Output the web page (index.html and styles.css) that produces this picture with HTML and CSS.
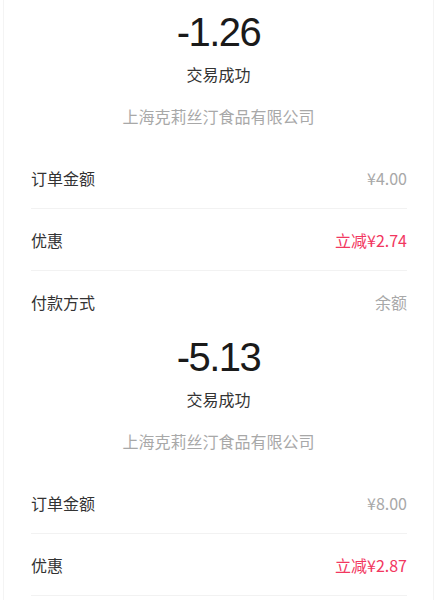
FILE: index.html
```html
<!DOCTYPE html>
<html lang="zh-CN">
<head>
    <meta charset="UTF-8">
    <meta name="viewport" content="width=device-width, initial-scale=1.0">
    <title>交易详情</title>
    <link rel="stylesheet" href="styles.css">
</head>
<body>

<div class="page">
    <div class="receipt receipt-top">
        <div class="summary">
            <div class="amount">-1.26</div>
            <div class="status">交易成功</div>
            <div class="merchant">上海克莉丝汀食品有限公司</div>
        </div>
        <div class="row">
            <span class="label">订单金额</span>
            <span class="value">¥4.00</span>
        </div>
        <div class="row">
            <span class="label">优惠</span>
            <span class="value discount">立减¥2.74</span>
        </div>
        <div class="row">
            <span class="label">付款方式</span>
            <span class="value">余额</span>
        </div>
    </div>

    <div class="receipt receipt-bottom">
        <div class="summary">
            <div class="amount">-5.13</div>
            <div class="status">交易成功</div>
            <div class="merchant">上海克莉丝汀食品有限公司</div>
        </div>
        <div class="row">
            <span class="label">订单金额</span>
            <span class="value">¥8.00</span>
        </div>
        <div class="row">
            <span class="label">优惠</span>
            <span class="value discount">立减¥2.87</span>
        </div>
    </div>
</div>

</body>
</html>
```

FILE: styles.css
```css
body {
    font-family: "Noto Sans CJK SC", "Noto Sans", sans-serif;
    background-color: #ffffff;
    color: #333333;
    margin: 0;
    padding: 0 3px;
}
.page {
    border-left: 1px solid #f4f4f4;
    border-right: 1px solid #f4f4f4;
}
/* two screenshots stacked: each one is cropped */
.receipt {
    overflow: hidden;
}
.receipt-top {
    height: 325px;
}
.receipt-bottom {
    height: 275px;
}
.summary {
    text-align: center;
    padding: 10px 0 20px;
}
.amount {
    font-family: "Liberation Sans", sans-serif;
    font-size: 40px;
    line-height: 45px;
    color: #1a1a1a;
    letter-spacing: -1.5px;
}
.status {
    font-size: 16px;
    line-height: 22px;
    margin-top: 8px;
    color: #333333;
}
.merchant {
    font-size: 16px;
    line-height: 22px;
    margin-top: 20px;
    color: #a8a8a8;
}
.row {
    display: flex;
    justify-content: space-between;
    align-items: center;
    height: 61px;
    margin: 0 26px 0 27px;
    border-bottom: 1px solid #f2f2f2;
    font-size: 16px;
}
.label {
    color: #333333;
}
.value {
    color: #a8a8a8;
}
.value.discount {
    color: #f2375f;
}
```
